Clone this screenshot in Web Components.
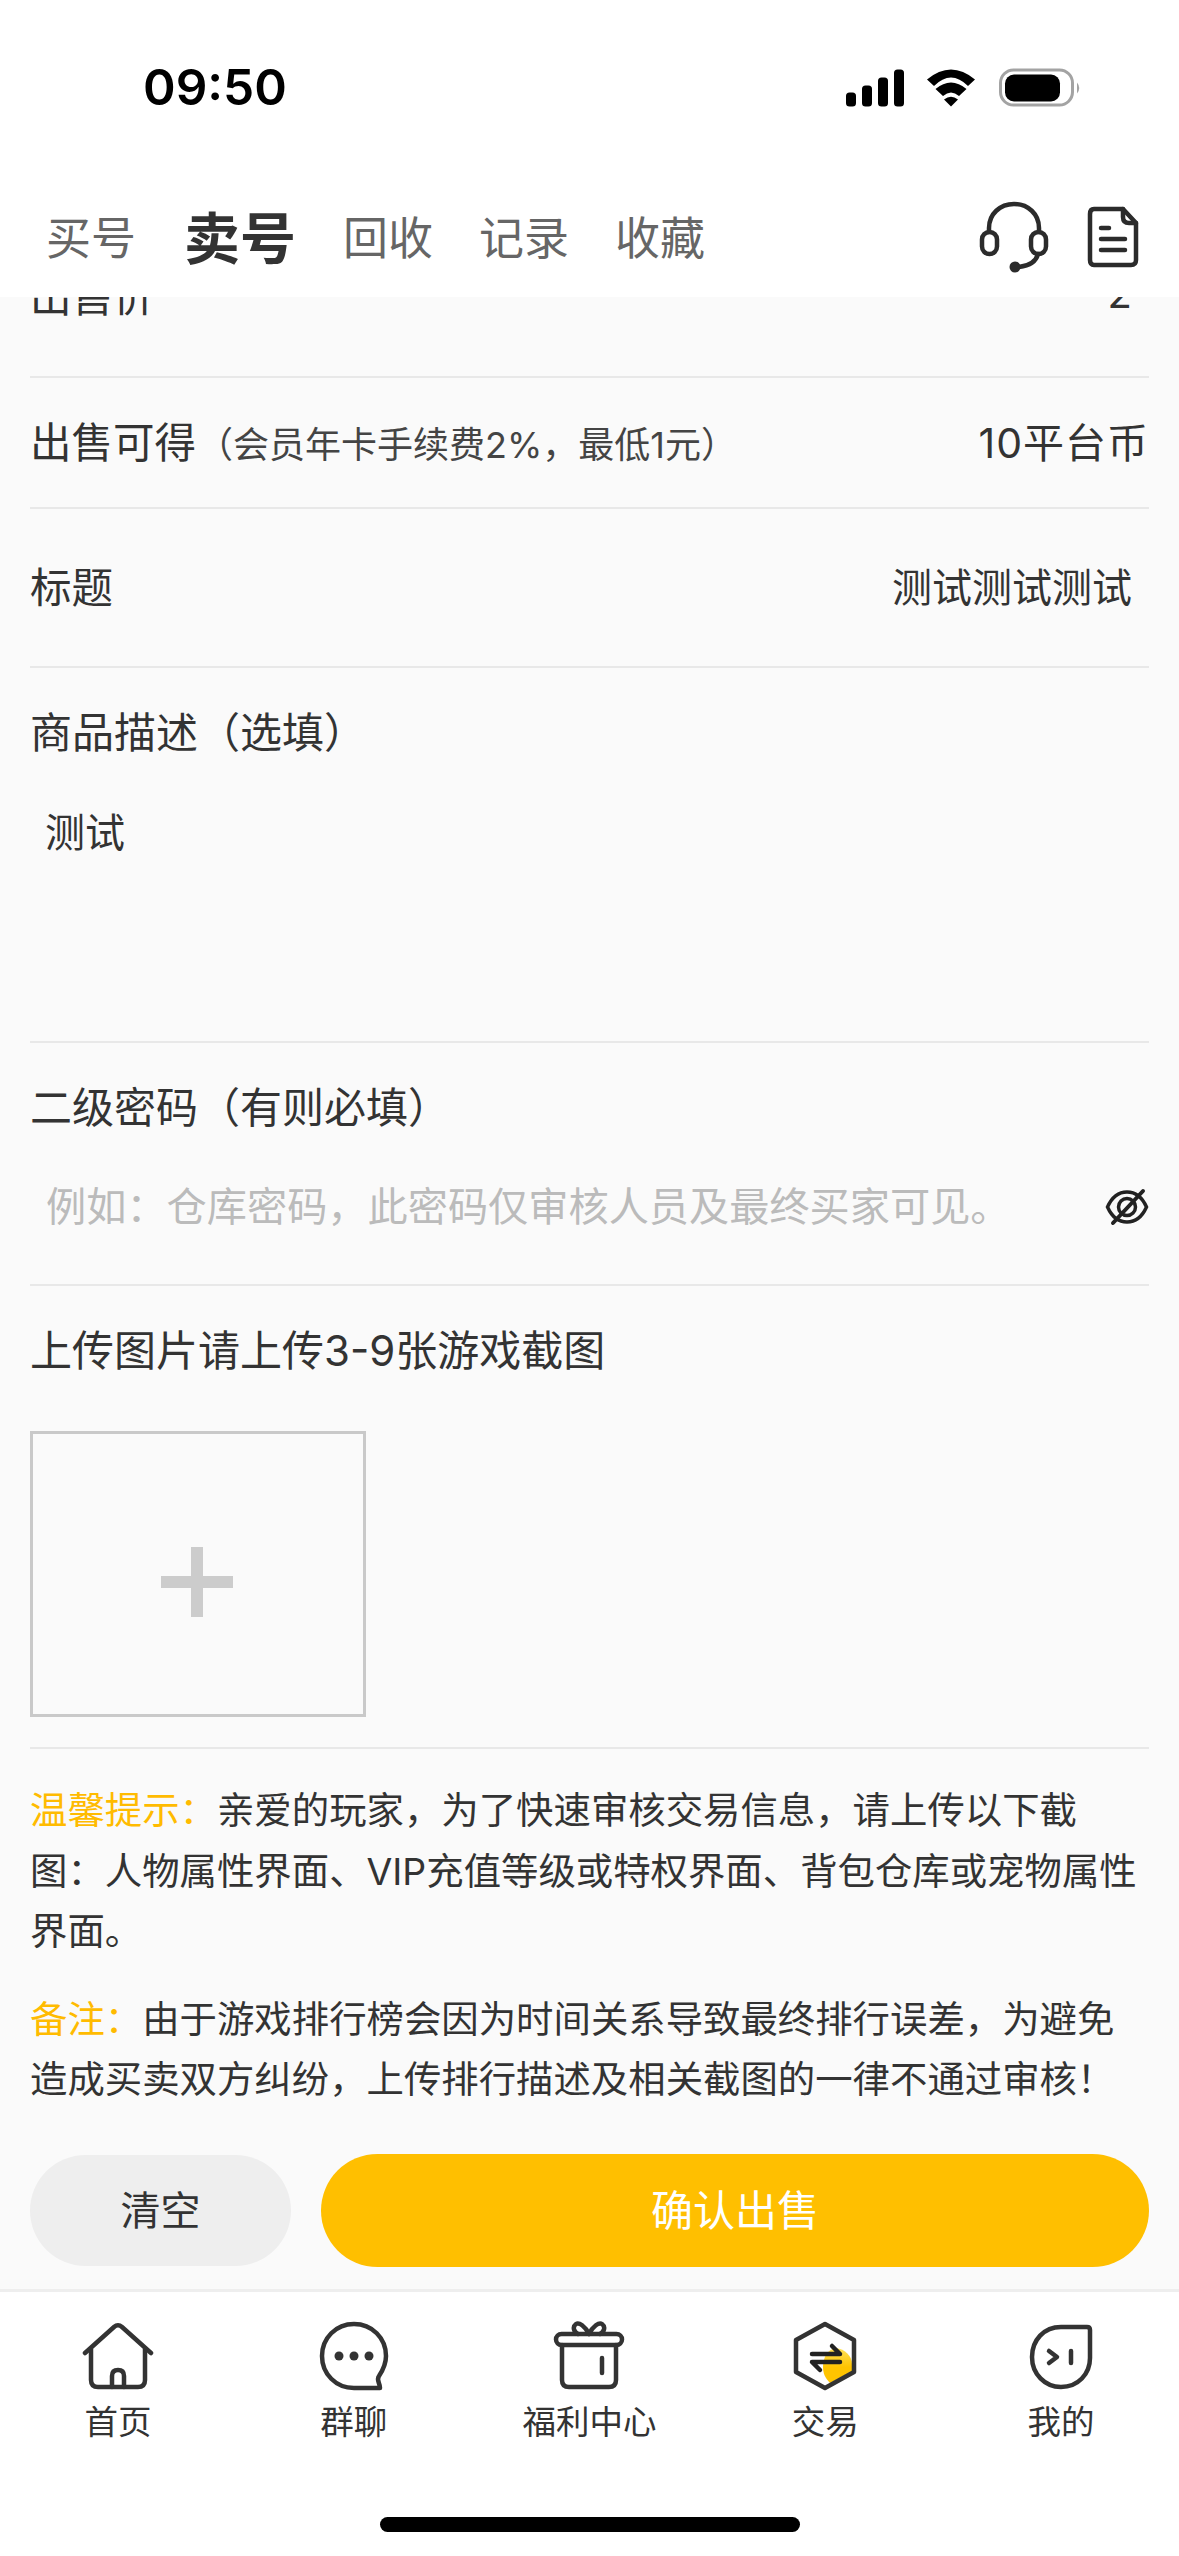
<!DOCTYPE html>
<html lang="zh">
<head>
<meta charset="utf-8">
<title>卖号</title>
<style>
  html, body { margin: 0; padding: 0; background: #fff; }
  body { font-family: Inter, "Noto Sans CJK SC", "Noto Sans", sans-serif; color: #333; }
</style>
</head>
<body>
<app-shell>
  <status-bar slot="top"></status-bar>
  <top-nav slot="top"></top-nav>

  <form-row style="--row-h:129px;--row-pb:36px">
    <span slot="label">出售价</span>
    <span slot="value" style="margin-right:17px">2</span>
  </form-row>
  <form-row style="--row-h:129px">
    <span slot="label">出售可得<small style="font-size:36px;color:#444;margin-left:1px">（会员年卡手续费2%，最低1元）</small></span>
    <span slot="value" style="font-size:41px;letter-spacing:1px">10平台币</span>
  </form-row>
  <form-row style="--row-h:157px">
    <span slot="label">标题</span>
    <span slot="value" style="margin-right:17px">测试测试测试</span>
  </form-row>
  <form-block label="商品描述（选填）" style="--block-h:373px">
    <div style="padding:40px 15px 0;font-size:40px;line-height:60px;color:#333">测试</div>
  </form-block>
  <form-block label="二级密码（有则必填）" style="--block-h:241px">
    <password-field placeholder="例如：仓库密码，此密码仅审核人员及最终买家可见。"></password-field>
  </form-block>
  <form-block label="上传图片请上传3-9张游戏截图" style="--block-h:461px">
    <upload-box></upload-box>
  </form-block>
  <tip-text>
    <div><b>温馨提示：</b><span>亲爱的玩家，为了快速审核交易信息，请上传以下截</span></div>
    <div>图：人物属性界面、VIP充值等级或特权界面、背包仓库或宠物属性</div>
    <div class="end">界面。</div>
    <div><b>备注：</b><span>由于游戏排行榜会因为时间关系导致最终排行误差，为避免</span></div>
    <div>造成买卖双方纠纷，上传排行描述及相关截图的一律不通过审核！</div>
  </tip-text>

  <action-bar slot="bottom"></action-bar>
  <tab-bar slot="bottom">
    <tab-item label="首页">
      <svg viewBox="0 0 72 72" fill="none" stroke="#333" stroke-width="4.5" stroke-linecap="round" stroke-linejoin="round">
        <path d="M3 33 L32 7 Q36 3.5 40 7 L69 33"/>
        <path d="M9 29 V60 Q9 67 16 67 H56 Q63 67 63 60 V29"/>
        <path d="M30 67 V56 Q30 50 36 50 Q42 50 42 56 V67"/>
      </svg>
    </tab-item>
    <tab-item label="群聊">
      <svg viewBox="0 0 72 72" fill="none" stroke="#333" stroke-width="4.5" stroke-linejoin="round">
        <path d="M62 68 H36 C18 68 4 54 4 36 C4 18 18 4 36 4 C54 4 68 18 68 36 C68 44 65 50 61 56 C58 60 62 63 62 68 Z"/>
        <circle cx="21" cy="36" r="4.5" fill="#333" stroke="none"/>
        <circle cx="36" cy="36" r="4.5" fill="#333" stroke="none"/>
        <circle cx="51" cy="36" r="4.5" fill="#333" stroke="none"/>
      </svg>
    </tab-item>
    <tab-item label="福利中心">
      <svg viewBox="0 0 72 72" fill="none" stroke="#333" stroke-width="4.5" stroke-linecap="round" stroke-linejoin="round">
        <rect x="3" y="14" width="66" height="11" rx="5.5"/>
        <path d="M9 25 V60 Q9 67 16 67 H56 Q63 67 63 60 V25"/>
        <path d="M36 14 C32 6 26 2 23 4 C19 7 21 12 25 14"/>
        <path d="M36 14 C40 6 46 2 49 4 C53 7 51 12 47 14"/>
        <path d="M49 38 V53"/>
      </svg>
    </tab-item>
    <tab-item label="交易">
      <svg viewBox="0 0 72 72" fill="none">
        <defs>
          <linearGradient id="trade" x1="0" y1="0" x2="0" y2="1">
            <stop offset="0" stop-color="#ffe25a"/>
            <stop offset="0.55" stop-color="#ffc400"/>
          </linearGradient>
        </defs>
        <path d="M47 28 C56 29 63 36 63 44 V51 L41 63 C36 58 34 53 34 47 C34 37 39 29 47 28 Z" fill="url(#trade)"/>
        <path d="M36 4 L65 20 V52 L36 68 L7 52 V20 Z" stroke="#333" stroke-width="4.5" stroke-linejoin="round"/>
        <path d="M23 34 H51 L43 26" stroke="#222" stroke-width="4.5" stroke-linecap="round" stroke-linejoin="round"/>
        <path d="M51 42 H23 L31 50" stroke="#222" stroke-width="4.5" stroke-linecap="round" stroke-linejoin="round"/>
      </svg>
    </tab-item>
    <tab-item label="我的">
      <svg viewBox="0 0 72 72" fill="none" stroke="#333" stroke-width="4.5" stroke-linecap="round" stroke-linejoin="round">
        <path d="M62 7 H36 C19 7 7 20 7 37 C7 54 20 67 36 67 C53 67 65 54 65 38 V10 Q65 7 62 7 Z"/>
        <path d="M24 31 L32 37 L24 43"/>
        <path d="M46 31 V43"/>
      </svg>
    </tab-item>
  </tab-bar>
  <home-indicator slot="bottom"></home-indicator>
</app-shell>

<script>
// page frame: fixed top, clipped middle, fixed bottom
class AppShell extends HTMLElement {
  constructor() {
    super();
    this.attachShadow({ mode: 'open' }).innerHTML = `
      <style>
        :host { display: flex; flex-direction: column; width: 1179px; height: 2556px; overflow: hidden; background: #fafafa; }
        .top, .bottom { flex: none; display: block; }
        .top { background: #fff; position: relative; z-index: 1; }
        main { flex: 1; min-height: 0; overflow: hidden; padding: 0 30px; }
        /* the form is scrolled, first row is cut by the header */
        .scroller { margin-top: -50px; }
      </style>
      <div class="top"><slot name="top"></slot></div>
      <main><div class="scroller"><slot></slot></div></main>
      <div class="bottom"><slot name="bottom"></slot></div>`;
  }
}

class StatusBar extends HTMLElement {
  constructor() {
    super();
    this.attachShadow({ mode: 'open' }).innerHTML = `
      <style>
        :host { display: flex; align-items: center; justify-content: space-between; height: 175px; box-sizing: border-box; padding: 0 98px 0 143px; background: #fff; }
        .time { font: 600 49.500px/1 Inter, "Liberation Sans", sans-serif; color: #000; }
        svg { display: block; }
      </style>
      <span class="time">09:50</span>
      <svg width="238" height="40" viewBox="0 0 238 40">
        <rect x="3" y="24.500" width="10" height="14" rx="3.500"/>
        <rect x="19" y="17.500" width="10" height="21" rx="3.500"/>
        <rect x="35" y="9.500" width="10" height="29" rx="3.500"/>
        <rect x="51" y="1.500" width="10" height="37" rx="3.500"/>
        <path d="M84 11.500 Q108 -8.500 132 11.500 L125 18 Q108 1 91 18 Z"/>
        <path d="M92.500 21 Q108 8 123.500 21 L116 28 Q108 21 100 28 Z"/>
        <path d="M108 38.500 L101 31.500 Q108 26 115 31.500 Z"/>
        <rect x="157.500" y="2" width="72" height="35" rx="13" fill="none" stroke="#a3a3a3" stroke-width="3"/>
        <rect x="162" y="6.500" width="55" height="27" rx="9"/>
        <path d="M234 14.500 Q238.500 20 234 25.500 Z" fill="#a3a3a3"/>
      </svg>`;
  }
}

class TopNav extends HTMLElement {
  constructor() {
    super();
    this.attachShadow({ mode: 'open' }).innerHTML = `
      <style>
        :host { display: flex; align-items: center; justify-content: space-between; height: 122px; box-sizing: border-box; padding: 0 40px 0 46px; background: #fff; }
        nav { display: flex; align-items: center; gap: 46px; padding-top: 6px; }
        span { font-size: 45px; line-height: 60px; color: #666; }
        .on { font-size: 56px; font-weight: 700; color: #333; margin: 0 1px 0 2px; }
        .icons { display: flex; align-items: center; gap: 37px; padding-top: 2px; }
        svg { display: block; }
      </style>
      <nav><span>买号</span><span class="on">卖号</span><span>回收</span><span>记录</span><span>收藏</span></nav>
      <div class="icons">
        <svg width="72" height="72" viewBox="0 0 72 72" fill="none" stroke="#2b2b2b" stroke-width="4.500" stroke-linecap="round">
          <path d="M11 31 V27 C11 13 22 3 36 3 C50 3 61 13 61 27 V31"/>
          <rect x="4" y="31" width="15" height="22" rx="7.500"/>
          <rect x="53" y="31" width="15" height="22" rx="7.500"/>
          <path d="M60 53 C58 61 50 65 41 66"/>
          <circle cx="37" cy="66" r="5.500" fill="#2b2b2b" stroke="none"/>
        </svg>
        <svg width="52" height="62" viewBox="0 0 52 62" fill="none" stroke="#2b2b2b" stroke-width="4.500" stroke-linecap="round" stroke-linejoin="round">
          <path d="M7 3 H36 L49 17 V54 Q49 59 44 59 H7 Q3 59 3 54 V8 Q3 3 7 3 Z"/>
          <path d="M36 3 V11 Q36 17 42 17 H49"/>
          <path d="M14 22 H22"/><path d="M14 33 H38"/><path d="M14 44 H38"/>
        </svg>
      </div>`;
  }
}

class FormRow extends HTMLElement {
  constructor() {
    super();
    this.attachShadow({ mode: 'open' }).innerHTML = `
      <style>
        :host { display: flex; align-items: center; justify-content: space-between; height: calc(var(--row-h, 129px) - var(--row-pb, 5px)); padding-bottom: var(--row-pb, 5px); border-bottom: 2px solid #e8e8e8; color: #333; white-space: nowrap; }
        ::slotted([slot=value]) { font-size: 40px; }
        ::slotted([slot=label]) { font-size: 41.500px; }
      </style>
      <slot name="label"></slot><slot name="value"></slot>`;
  }
}

class FormBlock extends HTMLElement {
  static get observedAttributes() { return ['label']; }
  constructor() {
    super();
    this.attachShadow({ mode: 'open' }).innerHTML = `
      <style>
        :host { display: block; box-sizing: content-box; height: var(--block-h, 200px); border-bottom: 2px solid #e8e8e8; }
        .label { font-size: 42px; line-height: 60px; padding-top: 35px; color: #333; }
      </style>
      <div class="label"></div><slot></slot>`;
  }
  attributeChangedCallback(name, oldVal, newVal) {
    this.shadowRoot.querySelector('.label').textContent = newVal;
  }
}

class PasswordField extends HTMLElement {
  constructor() {
    super();
    this.attachShadow({ mode: 'open' }).innerHTML = `
      <style>
        :host { display: flex; align-items: center; justify-content: space-between; padding: 39px 0 0 16px; height: 60px; }
        span { font-size: 40.200px; line-height: 60px; color: #bbb; white-space: nowrap; }
        svg { display: block; flex: none; }
      </style>
      <span></span>
      <svg width="44" height="44" viewBox="0 0 44 44" fill="none" stroke="#222" stroke-width="3.500" stroke-linecap="round">
        <path d="M2.500 22 C7 12 14 7 22 7 C30 7 37 12 41.500 22 C37 32 30 37 22 37 C14 37 7 32 2.500 22 Z"/>
        <circle cx="22" cy="22" r="8.500"/>
        <path d="M8 38 L38 6" stroke-width="4"/>
      </svg>`;
    this.shadowRoot.querySelector('span').textContent = this.getAttribute('placeholder');
  }
}

class UploadBox extends HTMLElement {
  constructor() {
    super();
    this.attachShadow({ mode: 'open' }).innerHTML = `
      <style>
        :host { display: flex; align-items: center; justify-content: center; box-sizing: border-box; width: 336px; height: 286px; margin-top: 50px; border: 3px solid #c9c9c9; }
        svg { display: block; margin: 16px 0 0 -2px; }
      </style>
      <svg width="72" height="70" viewBox="0 0 72 70" fill="#ccc"><rect x="30" y="0" width="12" height="70"/><rect x="0" y="29" width="72" height="12"/></svg>`;
  }
}

class TipText extends HTMLElement {
  constructor() {
    super();
    this.attachShadow({ mode: 'open' }).innerHTML = `
      <style>
        :host { display: block; padding: 32px 0 0; font-size: 37.400px; line-height: 60.500px; color: #333; white-space: nowrap; }
        ::slotted(.end) { margin-bottom: 27px; }
      </style>
      <slot></slot>`;
    // slotted b sits one level down, so colour it on the element itself
    this.querySelectorAll('b').forEach((b) => {
      b.style.fontWeight = '400';
      b.style.color = '#ffbb00';
    });
  }
}

class ActionBar extends HTMLElement {
  constructor() {
    super();
    this.attachShadow({ mode: 'open' }).innerHTML = `
      <style>
        :host { display: flex; gap: 30px; height: 113px; padding: 0 30px 22px; background: #fafafa; }
        div { display: flex; align-items: center; justify-content: center; box-sizing: border-box; padding-bottom: 6px; border-radius: 57px; font-size: 40px; }
        .clear { width: 261px; margin: 1px 0; background: #eee; color: #333; }
        .ok { flex: 1; background: #ffbf00; color: #fff; font-size: 42px; }
      </style>
      <div class="clear">清空</div><div class="ok">确认出售</div>`;
  }
}

class TabBar extends HTMLElement {
  constructor() {
    super();
    this.attachShadow({ mode: 'open' }).innerHTML = `
      <style>
        :host { display: grid; grid-template-columns: repeat(5, 1fr); align-content: start; box-sizing: border-box; height: 228px; padding-top: 28px; border-top: 3px solid #eee; background: #fff; }
      </style>
      <slot></slot>`;
  }
}

class TabItem extends HTMLElement {
  constructor() {
    super();
    this.attachShadow({ mode: 'open' }).innerHTML = `
      <style>
        :host { display: flex; flex-direction: column; align-items: center; }
        .icon { width: 72px; height: 72px; }
        ::slotted(svg) { display: block; width: 72px; height: 72px; }
        .label { margin-top: 8px; font-size: 33.500px; line-height: 44px; color: #333; white-space: nowrap; }
      </style>
      <div class="icon"><slot></slot></div><div class="label"></div>`;
    this.shadowRoot.querySelector('.label').textContent = this.getAttribute('label');
  }
}

class HomeIndicator extends HTMLElement {
  constructor() {
    super();
    this.attachShadow({ mode: 'open' }).innerHTML = `
      <style>
        :host { display: flex; justify-content: center; height: 39px; background: #fff; }
        div { width: 420px; height: 15px; border-radius: 8px; background: #000; }
      </style>
      <div></div>`;
  }
}

customElements.define('app-shell', AppShell);
customElements.define('status-bar', StatusBar);
customElements.define('top-nav', TopNav);
customElements.define('form-row', FormRow);
customElements.define('form-block', FormBlock);
customElements.define('password-field', PasswordField);
customElements.define('upload-box', UploadBox);
customElements.define('tip-text', TipText);
customElements.define('action-bar', ActionBar);
customElements.define('tab-bar', TabBar);
customElements.define('tab-item', TabItem);
customElements.define('home-indicator', HomeIndicator);
</script>
</body>
</html>
